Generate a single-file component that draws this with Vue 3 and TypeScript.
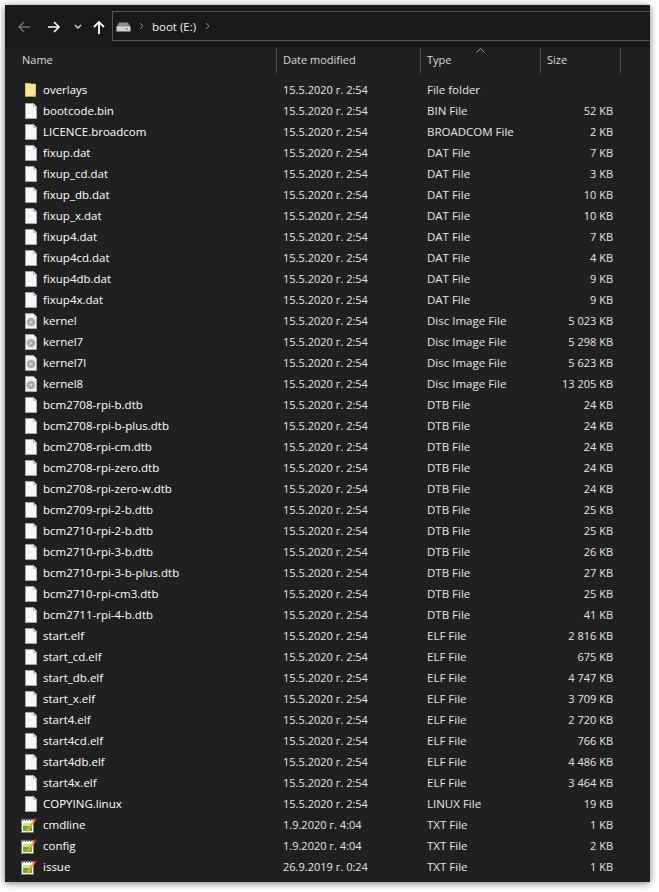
<script setup lang="ts">
type Kind = 'folder' | 'file' | 'disc' | 'txt'
interface Row { name: string; date: string; type: string; size: string; kind: Kind }
const D = '15.5.2020 г. 2:54'
const mk = (name: string, type: string, size: string, kind: Kind = 'file', date: string = D): Row => ({ name, date, type, size, kind })
const rows: Row[] = [
  mk('overlays', 'File folder', '', 'folder'),
  mk('bootcode.bin', 'BIN File', '52 KB'),
  mk('LICENCE.broadcom', 'BROADCOM File', '2 KB'),
  mk('fixup.dat', 'DAT File', '7 KB'),
  mk('fixup_cd.dat', 'DAT File', '3 KB'),
  mk('fixup_db.dat', 'DAT File', '10 KB'),
  mk('fixup_x.dat', 'DAT File', '10 KB'),
  mk('fixup4.dat', 'DAT File', '7 KB'),
  mk('fixup4cd.dat', 'DAT File', '4 KB'),
  mk('fixup4db.dat', 'DAT File', '9 KB'),
  mk('fixup4x.dat', 'DAT File', '9 KB'),
  mk('kernel', 'Disc Image File', '5 023 KB', 'disc'),
  mk('kernel7', 'Disc Image File', '5 298 KB', 'disc'),
  mk('kernel7l', 'Disc Image File', '5 623 KB', 'disc'),
  mk('kernel8', 'Disc Image File', '13 205 KB', 'disc'),
  mk('bcm2708-rpi-b.dtb', 'DTB File', '24 KB'),
  mk('bcm2708-rpi-b-plus.dtb', 'DTB File', '24 KB'),
  mk('bcm2708-rpi-cm.dtb', 'DTB File', '24 KB'),
  mk('bcm2708-rpi-zero.dtb', 'DTB File', '24 KB'),
  mk('bcm2708-rpi-zero-w.dtb', 'DTB File', '24 KB'),
  mk('bcm2709-rpi-2-b.dtb', 'DTB File', '25 KB'),
  mk('bcm2710-rpi-2-b.dtb', 'DTB File', '25 KB'),
  mk('bcm2710-rpi-3-b.dtb', 'DTB File', '26 KB'),
  mk('bcm2710-rpi-3-b-plus.dtb', 'DTB File', '27 KB'),
  mk('bcm2710-rpi-cm3.dtb', 'DTB File', '25 KB'),
  mk('bcm2711-rpi-4-b.dtb', 'DTB File', '41 KB'),
  mk('start.elf', 'ELF File', '2 816 KB'),
  mk('start_cd.elf', 'ELF File', '675 KB'),
  mk('start_db.elf', 'ELF File', '4 747 KB'),
  mk('start_x.elf', 'ELF File', '3 709 KB'),
  mk('start4.elf', 'ELF File', '2 720 KB'),
  mk('start4cd.elf', 'ELF File', '766 KB'),
  mk('start4db.elf', 'ELF File', '4 486 KB'),
  mk('start4x.elf', 'ELF File', '3 464 KB'),
  mk('COPYING.linux', 'LINUX File', '19 KB'),
  mk('cmdline', 'TXT File', '1 KB', 'txt', '1.9.2020 г. 4:04'),
  mk('config', 'TXT File', '2 KB', 'txt', '1.9.2020 г. 4:04'),
  mk('issue', 'TXT File', '1 KB', 'txt', '26.9.2019 г. 0:24'),
]
</script>

<template>
  <div class="window">
    <div class="toolbar">
      <svg class="nav back" width="14" height="14" viewBox="0 0 14 14"><path d="M13 7H2M7 2 2 7l5 5" fill="none" stroke="#6e6e6e" stroke-width="1.6" /></svg>
      <svg class="nav forward" width="14" height="14" viewBox="0 0 14 14"><path d="M1 7h11M7 2l5 5-5 5" fill="none" stroke="#fff" stroke-width="1.6" /></svg>
      <svg class="nav drop" width="8" height="6" viewBox="0 0 8 6"><path d="M1 1l3 3 3-3" fill="none" stroke="#d8d8d8" stroke-width="1.4" /></svg>
      <svg class="nav up" width="12" height="14" viewBox="0 0 12 14"><path d="M6 14V2M1 7l5-5 5 5" fill="none" stroke="#fff" stroke-width="1.8" /></svg>
      <div class="address">
        <svg class="drive" width="15" height="10" viewBox="0 0 15 10">
          <path d="M3 .5h9l2.500 4.500H.5z" fill="#8c8c8c" />
          <rect x=".5" y="4.500" width="14" height="5" fill="#d2d2d2" />
          <rect x="10" y="6" width="2" height="1.500" fill="#35c24a" />
        </svg>
        <svg class="crumb-sep" width="5" height="8" viewBox="0 0 5 8"><path d="M1 1l3 3-3 3" fill="none" stroke="#8a8a8a" /></svg>
        <span class="crumb">boot (E:)</span>
        <svg class="crumb-sep" width="5" height="8" viewBox="0 0 5 8"><path d="M1 1l3 3-3 3" fill="none" stroke="#8a8a8a" /></svg>
      </div>
    </div>
    <div class="list">
      <div class="header">
        <div class="hcell name">Name</div>
        <div class="hcell date">Date modified</div>
        <div class="hcell type">
          Type
          <svg class="sort" width="9" height="5" viewBox="0 0 9 5"><path d="M.5 4.500l4-4 4 4" fill="none" stroke="#9a9a9a" /></svg>
        </div>
        <div class="hcell size">Size</div>
      </div>
      <div class="rows">
        <div v-for="r in rows" :key="r.name" class="row">
          <div class="cell name">
            <svg v-if="r.kind === 'folder'" class="icon" width="16" height="16" viewBox="0 0 16 16">
              <path d="M2 1h5l1 .8h5v13H2z" fill="#e9bd52" />
              <path d="M3 2h9v12H3z" fill="#fbe39a" />
              <path d="M12.500 9v5.500H10.500V13H12V9z" fill="#e3b23f" />
            </svg>
            <svg v-else-if="r.kind === 'file'" class="icon" width="16" height="16" viewBox="0 0 16 16">
              <path d="M2.500 .5h8l3 3v12h-11z" fill="#f6f7f9" stroke="#a8a8a8" />
              <path d="M10.500 .5v3h3" fill="#d8dadd" stroke="#b8b8b8" />
            </svg>
            <svg v-else-if="r.kind === 'disc'" class="icon" width="16" height="16" viewBox="0 0 16 16">
              <path d="M2.500 .5h8l3 3v12h-11z" fill="#f0f1f2" stroke="#a8a8a8" />
              <circle cx="8" cy="9" r="4.300" fill="#a9aca9" />
              <circle cx="8" cy="9" r="1.300" fill="#d8d8d8" />
            </svg>
            <svg v-else class="icon txt" width="17" height="16" viewBox="0 0 17 16">
              <rect x=".5" y="2.500" width="12" height="13" fill="#fff" stroke="#7a7a7a" />
              <path d="M2 1v3M4.500 1v3M7 1v3M9.500 1v3" stroke="#555" />
              <rect x="2" y="6" width="9" height="8" fill="#5fae3c" />
              <path d="M2 6h9v3H2z" fill="#cfe38a" />
              <path d="M5 14 12 3l2 1.200L7 15z" fill="#f1a52a" />
              <path d="M13 1.500h2.500V4H13z" fill="#b5342c" />
            </svg>
            <span class="label">{{ r.name }}</span>
          </div>
          <div class="cell date">{{ r.date }}</div>
          <div class="cell type">{{ r.type }}</div>
          <div class="cell size">{{ r.size }}</div>
        </div>
      </div>
    </div>
  </div>
</template>

<style>
html, body { background: #fff; }
</style>

<style scoped>
.window {
  margin: 5px 9px 10px 5px;
  height: 877px;
  background: #202020;
  box-shadow: 0 1px 7px rgba(0, 0, 0, 0.55);
  font-family: "Open Sans", "Noto Sans", sans-serif;
  font-size: 11px;
  color: #fff;
  overflow: hidden;
}
.toolbar {
  height: 43px;
  background: #191919;
  display: flex;
  align-items: center;
  padding: 0 0 0 12px;
  box-sizing: border-box;
  position: relative;
}
.nav { flex: none; }
.forward { margin-left: 16px; }
.drop { margin-left: 13px; }
.up { margin-left: 11px; }
.address {
  margin-left: 7px;
  flex: 1;
  height: 30px;
  box-sizing: border-box;
  margin-top: -1px;
  border: 1px solid #555;
  border-right: none;
  display: flex;
  align-items: center;
  padding-left: 3px;
}
.drive { margin-top: 1px; }
.crumb-sep { margin-left: 8px; }
.crumb {
  margin-left: 8px;
  font-size: 11.5px;
  color: #f2f2f2;
}
.crumb + .crumb-sep { margin-left: 9px; }
.header {
  height: 25px;
  display: flex;
  padding-left: 11px;
}
.hcell {
  box-sizing: border-box;
  border-right: 1px solid #4d4d4d;
  color: #d9d9d9;
  padding: 3px 0 0 6px;
  position: relative;
  line-height: 18px;
}
.hcell.name { width: 261px; }
.hcell.date { width: 144px; }
.hcell.type { width: 120px; }
.hcell.size { width: 80px; }
.sort { position: absolute; left: 55px; top: 0; }
.rows { padding-top: 6px; }
.row {
  display: flex;
  height: 21px;
  align-items: center;
  padding-left: 11px;
}
.cell { white-space: nowrap; box-sizing: border-box; }
.cell.name {
  width: 261px;
  display: flex;
  align-items: center;
  padding-left: 7px;
}
.icon { flex: none; }
.icon.txt { margin-left: -2px; margin-right: 1px; }
.label { margin-left: 4px; font-size: 11.5px; }
.cell.date { width: 144px; padding-left: 6px; color: #e6e6e6; }
.cell.type { width: 120px; padding-left: 6px; color: #e6e6e6; font-size: 11.5px; }
.cell.size { width: 80px; padding-right: 8px; text-align: right; color: #e6e6e6; }
</style>
